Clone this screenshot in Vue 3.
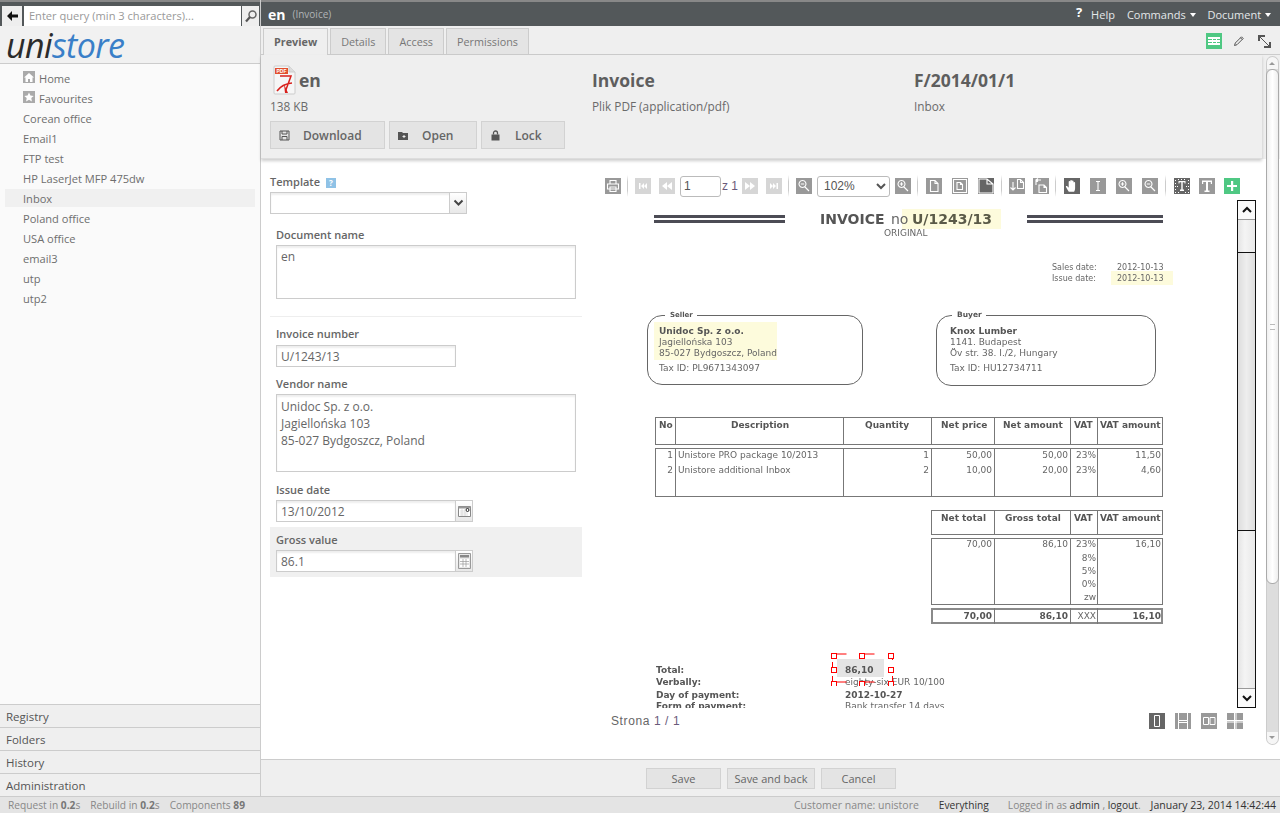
<template>
	<div class="app">
		<div class="body">
			<aside class="side">
				<div class="search">
					<button class="back">
						<svg width="14" height="14" viewBox="0 0 14 14"><path d="M7 2 2 7l5 5V8.500h6v-3H7z" fill="#111" /></svg>
					</button>
					<input class="query" placeholder="Enter query (min 3 characters)..." />
					<button class="go">
						<svg width="14" height="14" viewBox="0 0 14 14"><circle cx="8.500" cy="5.500" r="3.500" fill="none" stroke="#666" stroke-width="1.500" /><path d="M6 8 2 12.500" stroke="#555" stroke-width="2.200" /></svg>
					</button>
				</div>
				<div class="logo"><span class="uni">uni</span><span class="store">store</span></div>
				<nav class="nav">
					<a v-for="item in nav" :key="item.label" class="nav-item" :class="{ active: item.label === 'Inbox' }">
						<span v-if="item.icon" class="nav-icon">
							<svg width="12" height="12" viewBox="0 0 12 12"><path :d="item.icon" fill="#fff" /></svg>
						</span>
						{{ item.label }}
					</a>
				</nav>
				<div class="accordion">
					<div v-for="a in accordion" :key="a" class="acc">{{ a }}</div>
				</div>
			</aside>

			<main class="main">
				<header class="topbar">
					<span class="title">en</span>
					<span class="subtitle">(Invoice)</span>
					<span class="grow"></span>
					<span class="help-mark">?</span>
					<span class="menu help">Help</span>
					<span class="menu">Commands <i class="caret"></i></span>
					<span class="menu">Document <i class="caret"></i></span>
				</header>

				<div class="tabs">
					<span v-for="t in tabs" :key="t" class="tab" :class="{ current: t === 'Preview' }">{{ t }}</span>
					<span class="grow"></span>
					<span class="tool-green">
						<svg width="16" height="16" viewBox="0 0 16 16"><path d="M2 4h12v2H2zM2 7h12v2H2zM2 10h12v2H2zM6 4h1v8H6zM10 4h1v8h-1z" fill="#fff" /></svg>
					</span>
					<svg class="pencil" width="12" height="12" viewBox="0 0 12 12"><path d="M1.500 10.500 2.300 8 8.500 1.800l1.700 1.700L4 9.700zM7.500 2.800l1.700 1.700" fill="none" stroke="#555" /></svg>
					<svg class="expand" width="13" height="13" viewBox="0 0 13 13"><path d="M1 6V1h6M12 7v5H6" fill="none" stroke="#555" stroke-width="2" /><path d="M2 2l9 9" stroke="#555" /></svg>
				</div>

				<div class="pane">
					<div class="pane-inner">
						<section class="info">
							<div class="info-col col-file">
								<div class="file-head">
									<svg class="pdf" width="23" height="30" viewBox="0 0 23 30">
										<path d="M1 2Q1 1 2 1h14l6 6v21q0 1-1 1H2q-1 0-1-1z" fill="#f6f6f6" stroke="#ccc" />
										<path d="M16 1v6h6" fill="#ddd" stroke="#ccc" />
										<rect x="2" y="3" width="13" height="6" fill="#e2502e" />
										<text x="3.500" y="8" class="pdf-label">PDF</text>
										<path d="M7 11h11L12.500 26M4 26q5-7 15-8" fill="none" stroke="#d8201c" stroke-width="1.500" />
										<path d="M11 19l1 9h3z" fill="#d8201c" />
									</svg>
									<span class="h1">en</span>
								</div>
								<div class="sub">138 KB</div>
								<div class="file-actions">
									<button class="btn dl">
										<svg width="11" height="11" viewBox="0 0 11 11"><path d="M1 1h9v9H1zM3 1v3h5V1M3 10V6.500h5V10" fill="none" stroke="#555" /></svg>
										<span>Download</span>
									</button>
									<button class="btn op">
										<svg width="11" height="11" viewBox="0 0 11 11"><path d="M0 2h4l1 1h5v7H0z" fill="#555" /><path d="M6 5v3M4.500 6.500h3" stroke="#eee" /></svg>
										<span>Open</span>
									</button>
									<button class="btn lk">
										<svg width="11" height="11" viewBox="0 0 11 11"><rect x="1.500" y="4.500" width="8" height="6" fill="#555" /><path d="M3.500 4.500V3a2 2 0 0 1 4 0v1.500" fill="none" stroke="#555" stroke-width="1.300" /></svg>
										<span>Lock</span>
									</button>
								</div>
							</div>
							<div class="info-col col-type">
								<div class="h1 head-gap">Invoice</div>
								<div class="sub">Plik PDF (application/pdf)</div>
							</div>
							<div class="info-col">
								<div class="h1 head-gap">F/2014/01/1</div>
								<div class="sub">Inbox</div>
							</div>
						</section>

						<section class="content">
							<form class="form">
								<label class="lbl first">Template <i class="q">?</i></label>
								<div class="select-box">
									<span class="select-val"></span>
									<span class="addon">
										<svg width="11" height="8" viewBox="0 0 11 8"><path d="M1.500 1.500 5.500 5.500 9.500 1.500" fill="none" stroke="#444" stroke-width="2" /></svg>
									</span>
								</div>
								<div class="group">
									<label class="lbl">Document name</label>
									<textarea class="ta ta-name">en</textarea>
								</div>
								<hr class="rule" />
								<div class="group">
									<label class="lbl">Invoice number</label>
									<input class="inp inp-short" value="U/1243/13" />
									<label class="lbl vendor">Vendor name</label>
									<textarea class="ta ta-vendor">Unidoc Sp. z o.o.
Jagiellońska 103
85-027 Bydgoszcz, Poland</textarea>
									<label class="lbl issue">Issue date</label>
									<div class="with-addon">
										<input class="inp inp-short" value="13/10/2012" />
										<span class="addon">
											<svg width="13" height="13" viewBox="0 0 13 13"><path d="M.5 1.500h12v10H.5z" fill="#fff" stroke="#888" /><path d="M.5 1.500h12v2H.5z" fill="#999" /><circle cx="9.500" cy="5" r="1.500" fill="#fff" stroke="#222" /><path d="M2 6h5M2 8h8M2 10h8M4 4v7M7 4v7" stroke="#ccc" stroke-width=".6" /></svg>
										</span>
									</div>
								</div>
								<div class="group gross">
									<label class="lbl">Gross value</label>
									<div class="with-addon">
										<input class="inp inp-short" value="86.1" />
										<span class="addon">
											<svg width="13" height="16" viewBox="0 0 13 16"><path d="M.5.500h12v15H.5z" fill="#e8e8e8" stroke="#999" /><path d="M2 2h9v2.500H2z" fill="#888" /><path d="M2 6h9v8H2z" fill="#fff" /><path d="M2 8.500h9M2 11h9M5 6v8M8 6v8" stroke="#999" stroke-width=".7" /></svg>
										</span>
									</div>
								</div>
							</form>

							<div class="viewer">
								<div class="toolbar">
									<template v-for="t in toolbar" :key="t.x">
										<span v-if="t.kind === 'sep'" class="sep" :style="{ marginLeft: t.ml + 'px' }"></span>
										<input v-else-if="t.kind === 'page'" class="page-inp" value="1" :style="{ marginLeft: t.ml + 'px' }" />
										<span v-else-if="t.kind === 'of'" class="page-of" :style="{ marginLeft: t.ml + 'px' }">z 1</span>
										<select v-else-if="t.kind === 'zoom'" class="zoom-sel" :style="{ marginLeft: t.ml + 'px' }"><option>102%</option></select>
										<span v-else class="ti" :class="t.tone" :style="{ marginLeft: t.ml + 'px' }">
											<svg width="16" height="16" viewBox="0 0 16 16"><path :d="glyphs[t.i]" :fill="t.fill ? '#fff' : 'none'" :stroke="t.fill ? 'none' : '#fff'" stroke-width="1.100" /></svg>
										</span>
									</template>
								</div>

								<div class="doc-row">
									<div class="page">
										<div v-for="(b, n) in marks" :key="'m' + n" class="mark" :style="rectStyle(b)"></div>
										<div v-for="(b, n) in boxes" :key="'b' + n" class="box" :class="b.cls" :style="rectStyle(b)"></div>
										<span v-for="(t, n) in texts" :key="'t' + n" class="pt" :class="{ b: t.b }" :style="textStyle(t)">{{ t.t }}</span>
										<svg class="handles" width="64" height="34" viewBox="0 0 64 34">
											<path d="M1 3V1h14M29 1h14M1 15v-6M1 23v6M1 29h14M29 29h14M61 3v4M61 23v6" fill="none" stroke="#f00" transform="translate(.5 1)" />
											<rect v-for="(h, n) in handles" :key="n" :x="h[0]" :y="h[1]" width="5" height="5" fill="#fff" stroke="#f00" />
										</svg>
									</div>
									<div class="doc-scroll">
										<span class="ds-btn">
											<svg width="12" height="8" viewBox="0 0 12 8"><path d="M2 6l4-4 4 4" fill="none" stroke="#111" stroke-width="2" /></svg>
										</span>
										<span class="ds-thumb"></span>
										<span class="ds-btn down">
											<svg width="12" height="8" viewBox="0 0 12 8"><path d="M2 2l4 4 4-4" fill="none" stroke="#111" stroke-width="2" /></svg>
										</span>
									</div>
								</div>

								<div class="doc-foot">
									<span class="strona">Strona <em>1 / 1</em></span>
									<span class="grow"></span>
									<span v-for="(v, n) in viewModes" :key="n" class="ti vm" :class="{ dark: n === 0 }">
										<svg width="16" height="16" viewBox="0 0 16 16"><path :d="v" fill="none" stroke="#fff" stroke-width="1" /></svg>
									</span>
								</div>
							</div>
						</section>
					</div>

					<div class="outer-scroll">
						<span class="os-up"></span>
						<span class="os-track">
							<span class="os-thumb"><i></i></span>
						</span>
						<span class="os-down"></span>
					</div>
				</div>

				<div class="actions">
					<button class="btn act a1">Save</button>
					<button class="btn act a2">Save and back</button>
					<button class="btn act a3">Cancel</button>
				</div>
			</main>
		</div>

		<footer class="status">
			<span>Request in <b>0.2</b>s</span>
			<span class="st-gap">Rebuild in <b>0.2</b>s</span>
			<span class="st-gap">Components <b>89</b></span>
			<span class="grow"></span>
			<span class="st-customer">Customer name: unistore</span>
			<span class="dark st-every">Everything</span>
			<span class="st-log">Logged in as <span class="dark">admin</span> , <span class="dark">logout</span>.</span>
			<span class="dark st-date">January 23, 2014 14:42:44</span>
		</footer>
	</div>
</template>

<script setup>
const nav = [
	{ label: 'Home', icon: 'M6 2 1 6.500h1.500V11h2.500V8h2v3h2.500V6.500H11z' },
	{ label: 'Favourites', icon: 'M6 1.500l1.400 3 3.300.4-2.400 2.200.6 3.300L6 8.800l-2.900 1.600.6-3.300L1.300 4.900l3.300-.4z' },
	{ label: 'Corean office' },
	{ label: 'Email1' },
	{ label: 'FTP test' },
	{ label: 'HP LaserJet MFP 475dw' },
	{ label: 'Inbox' },
	{ label: 'Poland office' },
	{ label: 'USA office' },
	{ label: 'email3' },
	{ label: 'utp' },
	{ label: 'utp2' },
];
const accordion = ['Registry', 'Folders', 'History', 'Administration'];
const tabs = ['Preview', 'Details', 'Access', 'Permissions'];

const glyphs = {
	print: 'M5 6V2.500h6V6M2.500 6h11v5h-11zM5 9h6v4.500H5z',
	first: 'M4 5h1.500v6H4zM6 8l3-3v6zM9 8l3-3v6z',
	prev: 'M3 8l5-4v8zM8 8l5-4v8z',
	next: 'M13 8 8 4v8zM8 8 3 4v8z',
	last: 'M12 5h-1.500v6H12zM10 8 7 5v6zM7 8 4 5v6z',
	zoomOut: 'M6.500 2.500a3.500 3.500 0 1 0 .01 0zM9 9l4 4M4.800 6h3.400',
	zoomIn: 'M6.500 2.500a3.500 3.500 0 1 0 .01 0zM9 9l4 4M4.800 6h3.400M6.500 4.300v3.400',
	doc1: 'M4.500 2.500h4.500l3 3v8H4.500zM9 2.500v3h3',
	doc2: 'M5 4.500h3.500l2 2v5H5zM8.500 4.500v2h2M1.500 1.500h13v13h-13z',
	doc3: 'M1 1h8l6 5v9H1zM9 1v5h6',
	rotL: 'M8.500 1.500h3l3 3v6h-6zM11.500 1.500v3h3M4 4v8M1.500 9.500 4 12l2.500-2.500',
	rotR: 'M6 7h5l2.500 2.500v5H6zM11 7v2.500h2.500M8 2H3v5M5 .5 3 2l2 1.500',
	hand: 'M4.800 13.800C4 12 2 9.800 1.800 8.500c.6-1 1.800-.2 2.900 1.200V3.800a.8.8 0 0 1 1.600 0v3.400V2.700a.8.8 0 0 1 1.600 0v4.500V3.200a.8.8 0 0 1 1.600 0v4.300V4.700a.8.8 0 0 1 1.600 0v5.300c0 1.600-.5 3-1 3.800z',
	ibeam: 'M6 3.500h4M8 3.500v9M6 12.500h4',
	select: 'M4.500 3h7v2.500h-1V4.200H8.700v7.300H10V13H6v-1.500h1.300V4.200H5.500v1.300h-1zM1 2h1v1H1zM1 5h1v1H1zM1 8h1v1H1zM1 11h1v1H1zM1 14h1v1H1zM14 2h1v1h-1zM14 5h1v1h-1zM14 8h1v1h-1zM14 11h1v1h-1zM14 14h1v1h-1zM4 14h1v1H4zM11 14h1v1h-1zM4 1h1v1H4zM7 1h1v1H7zM10 1h1v1h-1zM3 8h1v1H3zM12 8h1v1h-1z',
	text: 'M3 2.500h10v3.500h-1.200V4H9v8.500h1.500V14h-5v-1.500H7V4H4.200v2H3z',
	plus: 'M7 3h2.200v3.900H13v2.200H9.200V13H7V9.100H3V6.900h4z',
};

// x = left edge in the window, so the gaps can be read off the reference
const rawToolbar = [
	{ x: 605, i: 'print' },
	{ x: 627, kind: 'sep', w: 1 },
	{ x: 635, i: 'first', fill: 1, tone: 'off' },
	{ x: 659, i: 'prev', fill: 1, tone: 'off' },
	{ x: 680, kind: 'page', w: 41 },
	{ x: 722, kind: 'of', w: 15 },
	{ x: 742, i: 'next', fill: 1, tone: 'off' },
	{ x: 766, i: 'last', fill: 1, tone: 'off' },
	{ x: 788, kind: 'sep', w: 1 },
	{ x: 796, i: 'zoomOut' },
	{ x: 817, kind: 'zoom', w: 73 },
	{ x: 895, i: 'zoomIn' },
	{ x: 917, kind: 'sep', w: 1 },
	{ x: 926, i: 'doc1' },
	{ x: 952, i: 'doc2' },
	{ x: 978, i: 'doc3', tone: 'dark' },
	{ x: 1001, kind: 'sep', w: 1 },
	{ x: 1009, i: 'rotL' },
	{ x: 1033, i: 'rotR' },
	{ x: 1055, kind: 'sep', w: 1 },
	{ x: 1064, i: 'hand', fill: 1, tone: 'dark' },
	{ x: 1090, i: 'ibeam' },
	{ x: 1116, i: 'zoomIn' },
	{ x: 1142, i: 'zoomOut' },
	{ x: 1165, kind: 'sep', w: 1 },
	{ x: 1174, i: 'select', fill: 1, tone: 'dark' },
	{ x: 1199, i: 'text', fill: 1 },
	{ x: 1224, i: 'plus', fill: 1, tone: 'green' },
];
const toolbar = rawToolbar.map((t, n) => {
	const prev = rawToolbar[n - 1];
	return { ...t, ml: prev ? t.x - prev.x - (prev.w || 16) : 0 };
});

const viewModes = [
	'M5.500 2.500h5v11h-5z',
	'M3.500 0v7.500h9V0M3.500 16V9.500h9V16M3.500 7.500V16M12.500 7.500V16',
	'M2.500 4.500h5v7h-5zM9 4.500h5v7H9z',
	'M0 7.500h16M0 9h16M7.500 0v16M9 0v16',
];

// invoice page, coordinates are window pixels; page origin is subtracted below
const ox = 605;
const oy = 200;
const rectStyle = (b) => ({
	left: b.x - ox + 'px',
	top: b.y - oy + 'px',
	width: b.w + 'px',
	height: b.h + 'px',
});
const textStyle = (t) => {
	const s = { top: t.y - oy - 7 + 'px', fontSize: (t.s || 9) + 'px' };
	if (t.a === 'r') s.right = 632 - (t.x - ox) + 'px';
	else s.left = t.x - ox + 'px';
	if (t.col) s.color = t.col;
	return s;
};

const marks = [
	{ x: 902, y: 209, w: 99, h: 20 },
	{ x: 1111, y: 271, w: 62, h: 14 },
	{ x: 654, y: 322, w: 123, h: 38 },
];

function table(x1, y1, x2, y2, cols) {
	const out = [{ x: x1, y: y1, w: x2 - x1, h: y2 - y1 }];
	cols.forEach((c) => out.push({ x: c, y: y1, w: 0, h: y2 - y1, cls: 'vline' }));
	return out;
}
const mainCols = [675, 843, 931, 994, 1070, 1097];
const sumCols = [994, 1070, 1097];
const boxes = [
	{ x: 654, y: 215, w: 131, h: 3, cls: 'bar' },
	{ x: 654, y: 220, w: 131, h: 3, cls: 'bar' },
	{ x: 1027, y: 215, w: 136, h: 3, cls: 'bar' },
	{ x: 1027, y: 220, w: 136, h: 3, cls: 'bar' },
	{ x: 647, y: 315, w: 216, h: 70, cls: 'round' },
	{ x: 936, y: 315, w: 220, h: 71, cls: 'round' },
	{ x: 665, y: 312, w: 32, h: 6, cls: 'gap' },
	{ x: 952, y: 312, w: 34, h: 6, cls: 'gap' },
	...table(655, 417, 1163, 445, mainCols),
	...table(655, 448, 1163, 497, mainCols),
	...table(931, 510, 1163, 535, sumCols),
	...table(931, 538, 1163, 605, sumCols),
	{ x: 931, y: 608, w: 232, h: 16, cls: 'thick' },
	...sumCols.map((c) => ({ x: c, y: 608, w: 0, h: 16, cls: 'vline' })),
	{ x: 837, y: 659, w: 47, h: 18, cls: 'grey' },
];

const rowNums = (y, a, b, c, d, bold) => [
	{ x: 992, y, t: a, a: 'r', b: bold },
	{ x: 1068, y, t: b, a: 'r', b: bold },
	{ x: 1096, y, t: c, a: 'r' },
	{ x: 1161, y, t: d, a: 'r', b: bold },
];

const texts = [
	{ x: 820, y: 219, t: 'INVOICE', b: 1, s: 14 },
	{ x: 891, y: 219, t: 'no', s: 14 },
	{ x: 912, y: 219, t: 'U/1243/13', b: 1, s: 14, col: '#5a5a48' },
	{ x: 884, y: 233, t: 'ORIGINAL', s: 9 },
	{ x: 1052, y: 268, t: 'Sales date:', s: 8 },
	{ x: 1052, y: 279, t: 'Issue date:', s: 8 },
	{ x: 1117, y: 268, t: '2012-10-13', s: 8 },
	{ x: 1117, y: 279, t: '2012-10-13', s: 8 },
	{ x: 670, y: 315, t: 'Seller', s: 7, b: 1 },
	{ x: 957, y: 315, t: 'Buyer', s: 7.500, b: 1 },
	{ x: 659, y: 331, t: 'Unidoc Sp. z o.o.', b: 1 },
	{ x: 659, y: 342, t: 'Jagiellońska 103' },
	{ x: 659, y: 353, t: '85-027 Bydgoszcz, Poland' },
	{ x: 659, y: 368, t: 'Tax ID: PL9671343097' },
	{ x: 950, y: 331, t: 'Knox Lumber', b: 1 },
	{ x: 950, y: 342, t: '1141. Budapest' },
	{ x: 950, y: 353, t: 'Öv str. 38. I./2, Hungary' },
	{ x: 950, y: 368, t: 'Tax ID: HU12734711' },
	{ x: 659, y: 425, t: 'No', b: 1 },
	{ x: 731, y: 425, t: 'Description', b: 1 },
	{ x: 865, y: 425, t: 'Quantity', b: 1 },
	{ x: 941, y: 425, t: 'Net price', b: 1 },
	{ x: 1003, y: 425, t: 'Net amount', b: 1 },
	{ x: 1074, y: 425, t: 'VAT', b: 1 },
	{ x: 1100, y: 425, t: 'VAT amount', b: 1 },
	{ x: 673, y: 455, t: '1', a: 'r' },
	{ x: 678, y: 455, t: 'Unistore PRO package 10/2013' },
	{ x: 929, y: 455, t: '1', a: 'r' },
	...rowNums(455, '50,00', '50,00', '23%', '11,50'),
	{ x: 673, y: 470, t: '2', a: 'r' },
	{ x: 678, y: 470, t: 'Unistore additional Inbox' },
	{ x: 929, y: 470, t: '2', a: 'r' },
	...rowNums(470, '10,00', '20,00', '23%', '4,60'),
	{ x: 941, y: 518, t: 'Net total', b: 1 },
	{ x: 1005, y: 518, t: 'Gross total', b: 1 },
	{ x: 1074, y: 518, t: 'VAT', b: 1 },
	{ x: 1100, y: 518, t: 'VAT amount', b: 1 },
	...rowNums(544, '70,00', '86,10', '23%', '16,10'),
	{ x: 1096, y: 558, t: '8%', a: 'r' },
	{ x: 1096, y: 571, t: '5%', a: 'r' },
	{ x: 1096, y: 584, t: '0%', a: 'r' },
	{ x: 1096, y: 597, t: 'zw', a: 'r' },
	...rowNums(616, '70,00', '86,10', 'XXX', '16,10', true),
	{ x: 656, y: 670, t: 'Total:', b: 1 },
	{ x: 656, y: 682, t: 'Verbally:', b: 1 },
	{ x: 656, y: 695, t: 'Day of payment:', b: 1 },
	{ x: 656, y: 706, t: 'Form of payment:', b: 1 },
	{ x: 845, y: 670, t: '86,10', b: 1 },
	{ x: 845, y: 682, t: 'eighty-six EUR 10/100' },
	{ x: 845, y: 695, t: '2012-10-27', b: 1 },
	{ x: 845, y: 706, t: 'Bank transfer 14 days' },
];

const handles = [
	[.5, 1.5], [28.500, 1.500], [57.500, 1.500],
	[.5, 15.500], [57.500, 15.500],
	[.5, 29.500], [28.500, 29.500], [57.500, 29.500],
];
</script>

<style scoped>
* { box-sizing: border-box; }
.app {
	width: 1280px;
	height: 813px;
	display: flex;
	flex-direction: column;
	overflow: hidden;
	font-family: "Open Sans", "Liberation Sans", sans-serif;
	font-size: 11.500px;
	color: #666;
	background: #fff;
}
.body { flex: 1; display: flex; min-height: 0; }
.grow { flex: 1; }
button { font: inherit; padding: 0; }

/* sidebar */
.side {
	width: 261px;
	display: flex;
	flex-direction: column;
	border-right: 1px solid #ccc;
	background: #fafafa;
}
.search {
	height: 26px;
	flex: none;
	display: flex;
	align-items: center;
	padding: 3px 1px 0 2px;
	background: #53585a;
	border-top: 2px solid #888;
}
.back {
	width: 20px;
	height: 20px;
	margin-right: 2px;
	background: #eee;
	border: 0;
	display: flex;
	align-items: center;
	justify-content: center;
}
.query {
	width: 218px;
	height: 20px;
	border: 0;
	padding: 0 5px;
	font: 11.100px "Open Sans", sans-serif;
	outline: 0;
	background: #fff;
}
.query::placeholder { color: #999; opacity: 1; }
.go {
	width: 17px;
	height: 20px;
	margin-left: 1px;
	background: #eee;
	border: 0;
	display: flex;
	align-items: center;
	justify-content: center;
}
.logo {
	height: 38px;
	flex: none;
	padding-left: 6px;
	background: #f1f1f1;
	border-bottom: 1px solid #ccc;
	font: italic 400 34px/38px "Open Sans", sans-serif;
	letter-spacing: -.6px;
}
.uni { color: #2b2b2b; }
.store { color: #3a7fc8; }
.nav { flex: 1; padding: 4px 5px 0; }
.nav-item {
	height: 20px;
	display: flex;
	align-items: center;
	padding-left: 18px;
	font-size: 11.100px;
	color: #6e6e6e;
}
.nav-item.active { background: #f0f0f0; height: 18px; margin: 1px 0; }
.nav-icon {
	width: 12px;
	height: 12px;
	margin-right: 4px;
	background: #aaa;
	display: block;
	position: relative;
	top: -1px;
}
.nav-icon svg { display: block; }
.acc {
	height: 23px;
	padding: 0 6px;
	line-height: 24px;
	background: #efefef;
	border-top: 1px solid #ccc;
	color: #555;
}

/* main column */
.main { flex: 1; display: flex; flex-direction: column; min-width: 0; }
.topbar {
	height: 26px;
	flex: none;
	display: flex;
	align-items: center;
	padding: 0 9px 0 7px;
	background: #53585a;
	border-top: 2px solid #888;
	color: #e4e8ea;
}
.title { font-weight: 700; font-size: 14px; color: #fff; }
.subtitle { margin-left: 7px; font-size: 10px; color: #b0b4b6; }
.help-mark { font: 700 13px "Open Sans", sans-serif; color: #fff; margin-right: 9px; position: relative; top: -2px; }
.menu { font-size: 11px; white-space: nowrap; }
.menu.help { margin-right: 12px; }
.menu:last-child { margin-left: 12px; }
.caret {
	display: inline-block;
	margin-left: 1px;
	vertical-align: 2px;
	border: 3.500px solid transparent;
	border-top: 4px solid #fff;
	border-bottom: 0;
}
.tabs {
	height: 29px;
	flex: none;
	display: flex;
	align-items: flex-end;
	padding: 0 7px 0 2px;
	background: #efefef;
	border-bottom: 1px solid #ccc;
}
.tab {
	height: 26px;
	line-height: 26px;
	padding: 0 10px;
	margin-right: 2px;
	font-size: 10.800px;
	background: #e4e4e4;
	border: 1px solid #ccc;
	border-bottom: 0;
	color: #777;
}
.tab.current {
	font-weight: 700;
	background: #efefef;
	height: 27px;
	margin-bottom: -1px;
	color: #666;
	padding: 0 10px;
}
.tool-green {
	width: 16px;
	height: 16px;
	align-self: center;
	background: #4fc883;
	margin-top: 2px;
	display: block;
}
.tool-green svg { display: block; }
.pencil { align-self: center; margin: 2px 0 0 11px; }
.expand { align-self: center; margin: 2px 2px 0 13px; }

.pane { flex: 1; display: flex; min-height: 0; }
.pane-inner { flex: 1; display: flex; flex-direction: column; min-width: 0; }
.info {
	height: 104px;
	flex: none;
	display: flex;
	padding: 10px 9px 0;
	background: #efefef;
	box-shadow: 0 2px 3px rgba(0, 0, 0, .2);
	border-bottom: 1px solid #ddd;
	position: relative;
	z-index: 1;
}
.info-col { width: 322px; }
.col-file { position: relative; }
.file-head { display: flex; align-items: center; height: 30px; padding-left: 3px; }
.pdf { flex: none; margin-right: 3px; }
.pdf-label { font: 700 5px "Liberation Sans", sans-serif; fill: #fff; }
.h1 { font-size: 17.500px; font-weight: 700; color: #5e5e5e; line-height: 30px; }
.head-gap { height: 30px; }
.sub { margin-top: 1px; font-size: 11.800px; line-height: 20px; color: #6a6a6a; }
.file-actions { display: flex; gap: 4px; margin-top: 5px; width: 320px; }
.btn {
	height: 28px;
	display: flex;
	align-items: center;
	background: #e4e4e4;
	border: 1px solid #d2d2d2;
	color: #666;
	font-size: 12px;
	font-weight: 600;
}
.btn svg { flex: none; margin-left: 8px; }
.dl { width: 115px; }
.dl span { margin-left: 13px; }
.op { width: 88px; }
.op span { margin-left: 13px; }
.lk { width: 84px; }
.lk span { margin-left: 14px; }

/* form + viewer */
.content { flex: 1; display: flex; min-height: 0; background: #fff; }
.form { width: 344px; padding: 15px 0 0 9px; flex: none; }
.lbl { display: block; font-size: 11px; font-weight: 600; color: #666; line-height: 16px; }
.q {
	display: inline-block;
	width: 10px;
	height: 10px;
	margin-left: 3px;
	background: #8fc2e6;
	color: #fff;
	font: 700 8px/10px "Open Sans", sans-serif;
	text-align: center;
}
.select-box { display: flex; width: 197px; height: 22px; margin-top: 2px; border: 1px solid #ccc; box-shadow: inset 0 2px 2px #eee; }
.select-val { flex: 1; }
.select-box .addon { height: 20px; margin: 0; }
.addon {
	width: 17px;
	height: 22px;
	border: 1px solid #ccc;
	background: linear-gradient(#fff, #e8e8e8);
	display: flex;
	align-items: center;
	justify-content: center;
	flex: none;
}
.select-box .addon { border-width: 0 0 0 1px; }
.group { padding: 0 6px; width: 312px; }
.select-box + .group { margin-top: 13px; }
.ta, .inp {
	display: block;
	border: 1px solid #ccc;
	box-shadow: inset 0 2px 2px #eee;
	padding: 0 4px;
	font: 12px/17px "Open Sans", sans-serif;
	color: #666;
	outline: 0;
	background: #fff;
	resize: none;
}
.ta { width: 300px; padding-top: 2px; overflow: hidden; }
.ta-name { height: 54px; margin-top: 2px; }
.ta-vendor { height: 78px; margin-top: 2px; padding-top: 3px; }
.inp { height: 22px; }
.inp-short { width: 180px; margin-top: 3px; }
.rule { margin: 17px 0 9px; width: 312px; border: 0; border-top: 1px solid #eee; }
.vendor { margin-top: 9px; }
.issue { margin-top: 10px; }
.with-addon { display: flex; }
.with-addon .inp-short { margin-top: 2px; }
.with-addon .addon { margin-top: 2px; border-left: 0; }
.gross { margin-top: 5px; background: #f0f0f0; height: 50px; padding-top: 5px; }

.viewer { flex: 1; min-width: 0; display: flex; flex-direction: column; }
.toolbar { display: flex; align-items: center; height: 22px; margin-top: 16px; }
.ti { width: 16px; height: 16px; background: #999; display: block; flex: none; }
.ti svg { display: block; }
.ti.off { background: #d6d6d6; }
.ti.dark { background: #666; }
.ti.green { background: #4fc883; }
.sep { width: 1px; height: 22px; background: linear-gradient(transparent, #ccc 30%, #ccc 70%, transparent); flex: none; }
.page-inp {
	width: 41px;
	height: 21px;
	border: 1px solid #bbb;
	border-radius: 3px;
	padding: 0 3px;
	font: 12px "Liberation Sans", sans-serif;
	color: #555;
	outline: 0;
}
.page-of { width: 15px; font: 12px "Liberation Sans", sans-serif; color: #6a5a7a; flex: none; white-space: nowrap; }
.zoom-sel {
	width: 73px;
	height: 21px;
	border: 1px solid #bbb;
	border-radius: 3px;
	background: #fff;
	font: 12px "Liberation Sans", sans-serif;
	color: #555;
	padding-left: 2px;
	outline: 0;
}
.doc-row { display: flex; height: 508px; margin-top: 3px; }
.page {
	width: 632px;
	height: 508px;
	position: relative;
	overflow: hidden;
	background: #fff;
	flex: none;
}
.mark { position: absolute; background: #fdfbdc; }
.box { position: absolute; border: 1px solid #777; filter: blur(.3px); }
.box.vline { border-width: 0 0 0 1px; border-color: #777; }
.box.bar { border: 0; background: #4c4c55; }
.box.round { border-radius: 15px; border-color: #666; }
.box.gap { border: 0; background: #fff; filter: none; }
.box.thick { border: 2px solid #8a8a8a; }
.box.grey { border: 0; background: #e4e4e4; filter: none; }
.pt {
	position: absolute;
	white-space: nowrap;
	font-family: "DejaVu Sans", sans-serif;
	line-height: 14px;
	color: #666;
	filter: blur(.3px);
}
.pt.b { font-weight: 700; color: #555; }
.handles { position: absolute; left: 226px; top: 452px; }
.doc-scroll {
	width: 19px;
	height: 508px;
	display: flex;
	flex-direction: column;
	border: solid #111;
	border-width: 0 1px;
	background: linear-gradient(90deg, #e4e4e4, #f4f4f4 40%, #e8e8e8);
}
.ds-btn {
	height: 20px;
	background: #fafafa;
	border-top: 1px solid #111;
	border-bottom: 1px solid #999;
	display: flex;
	align-items: center;
	justify-content: center;
	flex: none;
}
.ds-btn.down { border: 0; border-top: 1px solid #999; border-bottom: 1px solid #111; margin-top: auto; }
.ds-thumb {
	height: 279px;
	margin-top: 32px;
	background: linear-gradient(90deg, #ddd, #eee 50%, #ddd);
	border: solid #111;
	border-width: 1px 0;
	flex: none;
}
.doc-foot { display: flex; align-items: center; height: 16px; margin-top: 5px; padding-right: 19px; gap: 10px; }
.strona { margin-left: 6px; margin-top: -1px; font: 12px "Liberation Sans", sans-serif; letter-spacing: .6px; color: #666; }
.strona em { font-style: normal; color: #6a5a7a; }

.outer-scroll { width: 18px; flex: none; display: flex; flex-direction: column; align-items: center; padding: 1px 0 14px 2px; background: #fff; }
.pane-inner + .outer-scroll { background: linear-gradient(#efefef 104px, #fff 104px); }
.os-up, .os-down {
	width: 13px;
	height: 13px;
	flex: none;
	background: #f6f6f6;
	border: 1px solid #ccc;
	position: relative;
}
.os-up { border-radius: 7px 7px 0 0; border-bottom: 0; }
.os-down { border-radius: 0 0 7px 7px; border-top: 0; }
.os-up::after, .os-down::after {
	content: '';
	position: absolute;
	left: 2.500px;
	top: 5px;
	border: 3px solid transparent;
	border-top: 0;
	border-bottom: 3px solid #999;
}
.os-down::after { border-bottom: 0; border-top: 3px solid #999; top: 4px; }
.os-track { flex: 1; width: 13px; background: #ddd; border: solid #ccc; border-width: 0 1px; min-height: 0; }
.os-thumb {
	display: flex;
	align-items: center;
	justify-content: center;
	height: 515px;
	margin: 0 -1px;
	background: linear-gradient(90deg, #f0f0f0, #fff 50%, #eee);
	border: 1px solid #aaa;
	border-radius: 6px;
}
.os-thumb i { width: 5px; height: 6px; border-top: 1px solid #bbb; border-bottom: 1px solid #bbb; }

.actions {
	height: 37px;
	flex: none;
	display: flex;
	align-items: center;
	gap: 6px;
	padding-left: 385px;
	background: #efefef;
	border-top: 1px solid #ccc;
}
.btn.act { height: 21px; justify-content: center; font-size: 11px; font-weight: 400; color: #666; }
.a1, .a3 { width: 75px; }
.a2 { width: 88px; }

.status {
	height: 17px;
	flex: none;
	display: flex;
	align-items: center;
	padding: 0 4px 0 8px;
	background: #e4e4e4;
	border-top: 1px solid #ccc;
	font-size: 10.200px;
	color: #888;
	white-space: nowrap;
}
.status b { font-weight: 700; color: #777; }
.st-gap { margin-left: 10px; }
.dark { color: #333; }
.st-customer { font-size: 10.500px; }
.st-every { margin-left: 20px; }
.st-log { margin-left: 19px; }
.st-date { margin-left: 10px; font-size: 10.500px; }
</style>
